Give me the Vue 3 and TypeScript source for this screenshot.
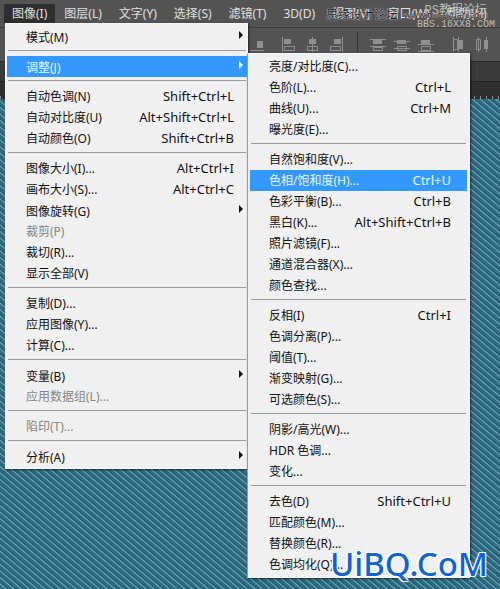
<script setup lang="ts">
interface Item { label: string; keys?: string; sub?: boolean; off?: boolean; on?: boolean }

const bar: string[] = ['图像(I)', '图层(L)', '文字(Y)', '选择(S)', '滤镜(T)', '3D(D)', '视图(V)', '窗口(W)', '帮助(H)']

const imageMenu: Item[][] = [
  [{ label: '模式(M)', sub: true }],
  [{ label: '调整(J)', sub: true, on: true }],
  [
    { label: '自动色调(N)', keys: 'Shift+Ctrl+L' },
    { label: '自动对比度(U)', keys: 'Alt+Shift+Ctrl+L' },
    { label: '自动颜色(O)', keys: 'Shift+Ctrl+B' },
  ],
  [
    { label: '图像大小(I)...', keys: 'Alt+Ctrl+I' },
    { label: '画布大小(S)...', keys: 'Alt+Ctrl+C' },
    { label: '图像旋转(G)', sub: true },
    { label: '裁剪(P)', off: true },
    { label: '裁切(R)...' },
    { label: '显示全部(V)' },
  ],
  [{ label: '复制(D)...' }, { label: '应用图像(Y)...' }, { label: '计算(C)...' }],
  [{ label: '变量(B)', sub: true }, { label: '应用数据组(L)...', off: true }],
  [{ label: '陷印(T)...', off: true }],
  [{ label: '分析(A)', sub: true }],
]

const adjustMenu: Item[][] = [
  [
    { label: '亮度/对比度(C)...' },
    { label: '色阶(L)...', keys: 'Ctrl+L' },
    { label: '曲线(U)...', keys: 'Ctrl+M' },
    { label: '曝光度(E)...' },
  ],
  [
    { label: '自然饱和度(V)...' },
    { label: '色相/饱和度(H)...', keys: 'Ctrl+U', on: true },
    { label: '色彩平衡(B)...', keys: 'Ctrl+B' },
    { label: '黑白(K)...', keys: 'Alt+Shift+Ctrl+B' },
    { label: '照片滤镜(F)...' },
    { label: '通道混合器(X)...' },
    { label: '颜色查找...' },
  ],
  [
    { label: '反相(I)', keys: 'Ctrl+I' },
    { label: '色调分离(P)...' },
    { label: '阈值(T)...' },
    { label: '渐变映射(G)...' },
    { label: '可选颜色(S)...' },
  ],
  [{ label: '阴影/高光(W)...' }, { label: 'HDR 色调...' }, { label: '变化...' }],
  [
    { label: '去色(D)', keys: 'Shift+Ctrl+U' },
    { label: '匹配颜色(M)...' },
    { label: '替换颜色(R)...' },
    { label: '色调均化(Q)...' },
  ],
]

const menus = [
  { name: 'image', groups: imageMenu },
  { name: 'adjust', groups: adjustMenu },
]
</script>

<template>
  <div class="app">
    <nav class="menubar">
      <button v-for="(b, i) in bar" :key="b" class="top" :class="{ open: i === 0 }">{{ b }}</button>
    </nav>
    <div class="options">
      <svg class="tools" width="250" height="24" viewBox="250 32 250 24" fill="none" stroke="#8f8f8f" aria-hidden="true">
        <g fill="#8f8f8f" stroke="none">
          <rect x="257" y="41" width="6" height="7" />
          <rect x="284" y="39" width="7" height="5" /><rect x="309" y="39" width="7" height="5" /><rect x="334" y="39" width="7" height="5" />
          <rect x="373" y="40" width="9" height="4" /><rect x="397" y="40" width="9" height="4" /><rect x="421" y="40" width="9" height="4" />
          <rect x="459" y="40" width="4" height="9" /><rect x="484" y="40" width="4" height="9" />
        </g>
        <path d="M250 50.500h14M282.500 37v15M284.500 46.500h10v4h-10zM312.500 37v15M307.500 46.500h10v4h-10zM342.500 37v15M330.500 46.500h10v4h-10zM370 39.500h16M370 46.500h16M373.500 47.500h9v3h-9zM394 41.500h16M394 48.500h16M397.500 46.500h9v4h-9zM418 44.500h16M418 51.500h16M421.500 46.500h9v4h-9zM453.500 37v15M458.500 37v15M453.500 39.500h4v10h-4zM478.500 37v15M486.500 37v15M476.500 39.500h4v10h-4z" />
        <path stroke="#333" d="M357.500 32v20" />
      </svg>
    </div>
    <div class="tabs"></div>
    <div class="ruler"></div>
    <main class="canvas"></main>

    <div class="mark-a"><span>思缘设计论坛</span><span class="url">www.missyuan.com</span></div>
    <div class="mark-b"><span class="forum">PS教程论坛</span><span>BBS.16XX8.COM</span></div>

    <div v-for="m in menus" :key="m.name" class="menu" :class="m.name" role="menu">
      <div v-for="(g, gi) in m.groups" :key="gi" class="group">
        <button v-for="it in g" :key="it.label" class="item" :class="{ on: it.on, sub: it.sub }" :disabled="it.off" role="menuitem">
          <span>{{ it.label }}</span>
          <span v-if="it.keys" class="keys">{{ it.keys }}</span>
          <svg v-if="it.sub" class="arrow" width="4" height="8" viewBox="0 0 4 8" aria-hidden="true"><path d="M0 0L4 4L0 8z" fill="currentColor" /></svg>
        </button>
      </div>
    </div>

    <div class="brand">UiBQ.CoM</div>
  </div>
</template>

<style>
body { margin: 0; background: #2b6478; }
</style>

<style scoped>
.app {
  position: relative;
  min-height: 100vh;
  display: flex;
  flex-direction: column;
  overflow: hidden;
  font: 12px/21px "Noto Sans", "Noto Sans CJK SC", sans-serif;
}
button { font: inherit; border: 0; margin: 0; background: none; white-space: nowrap; }
.menubar {
  display: flex;
  gap: 1px;
  height: 28px;
  padding-left: 4px;
  background: #535353;
  border-bottom: 1px solid #3b3b3b;
  box-sizing: border-box;
}
.top { height: 20px; margin-top: 4px; padding: 0 8px; color: #e0e0e0; line-height: 20px; }
.open { background: #2e2e2e; border-radius: 2px 2px 0 0; }
.options { height: 34px; background: #535353; border-bottom: 1px solid #2b2b2b; box-sizing: border-box; display: flex; justify-content: flex-end; }
.tools { margin-top: 4px; }
.tabs { height: 20px; background: #3a3a3a; border-bottom: 1px solid #222; box-sizing: border-box; }
.ruler {
  height: 17px;
  background: repeating-linear-gradient(90deg, #888 0 1px, transparent 1px 6px) bottom / 100% 3px no-repeat, #2e2e2e;
}
.canvas { flex: 1; background: repeating-linear-gradient(40deg, #285a6d 0, #2f6f86 2px, #2d687d 3px, #6fb0c2 4px, #285a6d 5px); }
.menu {
  position: absolute;
  box-sizing: border-box;
  background: #f0f0f0;
  border: 1px solid #f7f7f7;
  box-shadow: 1px 1px 2px #0009;
}
.image { left: 5px; top: 23px; width: 243px; padding: 2px 0 1px 1px; }
.adjust { left: 247px; top: 53px; width: 223px; padding: 2px; border-left-color: #999; }
.group + .group::before { content: ""; display: block; height: 1px; margin: 3px 1px 5px; background: #9a9a9a; }
.item {
  display: flex;
  align-items: center;
  width: 100%;
  height: 21px;
  padding: 0 13px 0 19px;
  color: #111;
  text-align: left;
}
.adjust .item { padding-right: 16px; }
.item:disabled { color: #858585; }
.item.sub { padding-top: 2px; }
.item.on { background: #3399ff; color: #e8f5ff; }
.keys { margin-left: auto; font-size: 13px; }
.arrow { margin: 0 -9px 6px auto; }
.mark-a {
  position: absolute; left: 326px; top: 4px; display: flex; gap: 6px; white-space: nowrap; color: #1c1c1c;
  text-shadow: 0 0 1px #ddd, 0 0 1px #ddd;
}
.url { font-size: 9px; }
.mark-b {
  position: absolute; right: 5px; top: 5px; display: flex; flex-direction: column; align-items: flex-end;
  font: 10px/13px "Liberation Mono", "Noto Sans CJK SC", monospace; color: #bdbdbd;
}
.forum { padding-right: 8px; font-size: 12px; }
.brand {
  position: absolute; left: 330px; top: 546px; font: 33px/36px "Noto Sans", sans-serif; font-weight: 500;
  color: #1064d0; text-shadow: 1px 1px #fff, -1px -1px #fff, 1px -1px #fff, -1px 1px #fff;
}
</style>
